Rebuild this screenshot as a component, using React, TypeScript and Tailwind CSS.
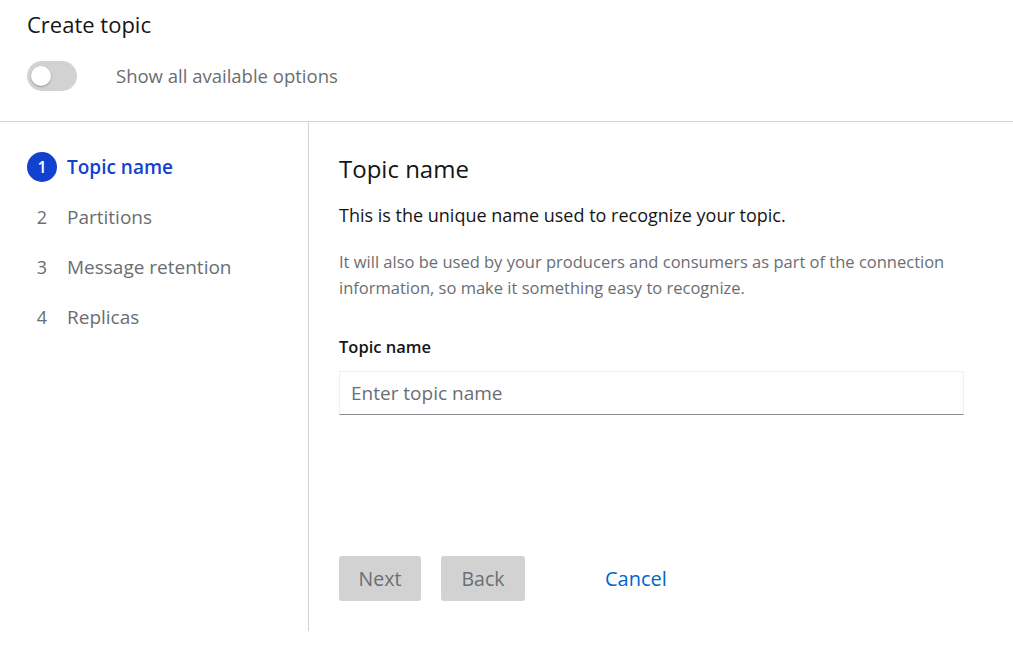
import { useState } from "react";

const steps = ["Topic name", "Partitions", "Message retention", "Replicas"];

export default function App() {
  const [showAll, setShowAll] = useState(false);
  const [name, setName] = useState("");

  return (
    <div className="h-[667px] bg-white text-[#151515] font-['Open_Sans',sans-serif] flex flex-col">
      <div className="pl-[27px] pt-[9px] h-[122px] border-b border-[#d2d2d2]">
        <h1 className="text-[22px] leading-[30px] font-normal">Create topic</h1>
        <div className="flex items-center mt-[22px]">
          <button
            onClick={() => setShowAll(!showAll)}
            className="w-[50px] h-[30px] rounded-full bg-[#d2d2d2] flex items-center px-[4px]"
          >
            <span className="w-[20px] h-[20px] rounded-full bg-white shadow-[0_1px_2px_rgba(0,0,0,0.3)]" />
          </button>
          <span className="ml-[39px] text-[18.5px] text-[#6a6e73]">Show all available options</span>
        </div>
      </div>

      <div className="flex">
        <nav className="w-[309px] h-[509px] border-r border-[#d2d2d2] pt-[30px] pl-[27px]">
          <ol className="flex flex-col gap-[20px]">
            {steps.map((s, i) => (
              <li key={s} className="flex items-center h-[30px]">
                {i === 0 ? (
                  <span className="w-[30px] h-[30px] rounded-full bg-[#1142cf] text-white text-[16px] font-semibold flex items-center justify-center">
                    {i + 1}
                  </span>
                ) : (
                  <span className="w-[30px] h-[30px] text-[#6a6e73] text-[18px] flex items-center justify-center">
                    {i + 1}
                  </span>
                )}
                <span
                  className={
                    i === 0
                      ? "ml-[10px] text-[19px] font-semibold text-[#1142cf]"
                      : "ml-[10px] text-[19px] text-[#6a6e73]"
                  }
                >
                  {s}
                </span>
              </li>
            ))}
          </ol>
        </nav>

        <main className="flex-1 pl-[30px] pr-[49px] pt-[31px] flex flex-col">
          <h2 className="text-[24px] leading-[32px] font-normal">Topic name</h2>
          <p className="mt-[17px] text-[18px] leading-[26px]">
            This is the unique name used to recognize your topic.
          </p>
          <p className="mt-[21px] text-[16.5px] leading-[26px] text-[#6a6e73]">
            It will also be used by your producers and consumers as part of the connection information, so make it
            something easy to recognize.
          </p>
          <label className="mt-[34px] text-[16.5px] leading-[24px] font-semibold">Topic name</label>
          <input
            value={name}
            onChange={(e) => setName(e.target.value)}
            placeholder="Enter topic name"
            className="mt-[12px] h-[44px] px-[11px] text-[19px] border border-[#f0f0f0] border-b-[#8a8d90] outline-none placeholder:text-[#6a6e73]"
          />
          <div className="flex items-center mt-[141px]">
            <button className="w-[82px] h-[45px] rounded-[3px] bg-[#d2d2d2] text-[#6a6e73] text-[19.5px]">Next</button>
            <button className="ml-[20px] w-[84px] h-[45px] rounded-[3px] bg-[#d2d2d2] text-[#6a6e73] text-[19.5px]">
              Back
            </button>
            <button className="ml-[80px] text-[20px] text-[#0066cc]">Cancel</button>
          </div>
        </main>
      </div>
    </div>
  );
}
